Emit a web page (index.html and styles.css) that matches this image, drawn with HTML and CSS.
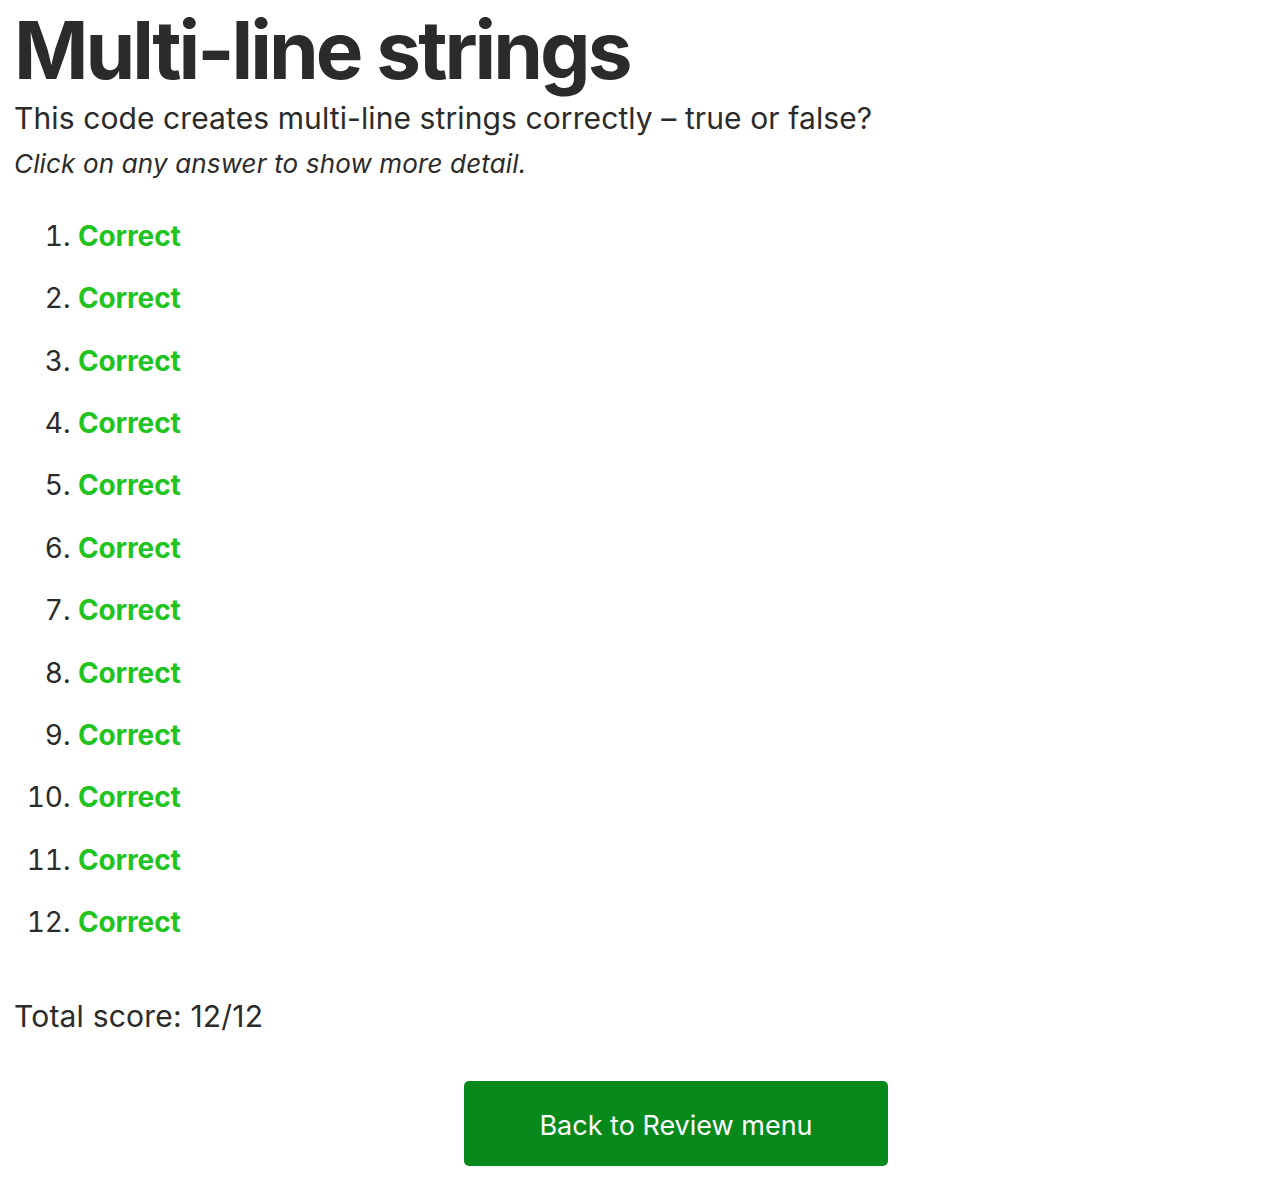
FILE: index.html
```html
<!DOCTYPE html>
<html lang="en">
<head>
<meta charset="utf-8">
<title>Multi-line strings</title>
<link rel="stylesheet" href="styles.css">
</head>
<body>
<main class="page">
  <h1 class="title">Multi-line strings</h1>
  <p class="question">This code creates multi-line strings correctly – true or false?</p>
  <p class="hint">Click on any answer to show more detail.</p>
  <ol class="answers">
    <li><span class="correct">Correct</span></li>
    <li><span class="correct">Correct</span></li>
    <li><span class="correct">Correct</span></li>
    <li><span class="correct">Correct</span></li>
    <li><span class="correct">Correct</span></li>
    <li><span class="correct">Correct</span></li>
    <li><span class="correct">Correct</span></li>
    <li><span class="correct">Correct</span></li>
    <li><span class="correct">Correct</span></li>
    <li><span class="correct">Correct</span></li>
    <li><span class="correct">Correct</span></li>
    <li><span class="correct">Correct</span></li>
  </ol>
  <p class="score">Total score: 12/12</p>
  <div class="actions">
    <a class="back-btn" href="#">Back to Review menu</a>
  </div>
</main>
</body>
</html>
```

FILE: styles.css
```css
html, body {
  margin: 0;
  padding: 0;
  background: #ffffff;
}
body {
  font-family: Inter, "Noto Sans", "Liberation Sans", sans-serif;
  color: #2b2b2b;
}
.page {
  padding: 0 14px;
}
.title {
  font-size: 80px;
  font-weight: 700;
  line-height: 100px;
  margin: 0;
  letter-spacing: -3px;
}
.question {
  font-size: 30px;
  line-height: 36px;
  margin: 0;
  letter-spacing: 0.1px;
}
.hint {
  font-size: 26px;
  font-style: italic;
  line-height: 36px;
  margin: 10px 0 0;
  letter-spacing: 0.15px;
}
.answers {
  margin: 37px 0 0;
  padding-left: 64px;
  font-size: 28px;
}
.answers li {
  line-height: 34px;
  padding-bottom: 28.36px;
}
.correct {
  color: #1fc41f;
  font-weight: 700;
  letter-spacing: -0.15px;
}
.score {
  font-size: 30px;
  line-height: 36px;
  margin: 31px 0 0;
  letter-spacing: 0.2px;
}
.actions {
  display: flex;
  justify-content: center;
  padding-left: 72px;
  margin-top: 47px;
}
.back-btn {
  display: flex;
  align-items: center;
  justify-content: center;
  box-sizing: border-box;
  width: 424px;
  height: 85px;
  padding-top: 3px;
  background: #07891b;
  color: #ffffff;
  font-size: 27px;
  text-decoration: none;
  border-radius: 5px;
}
```
